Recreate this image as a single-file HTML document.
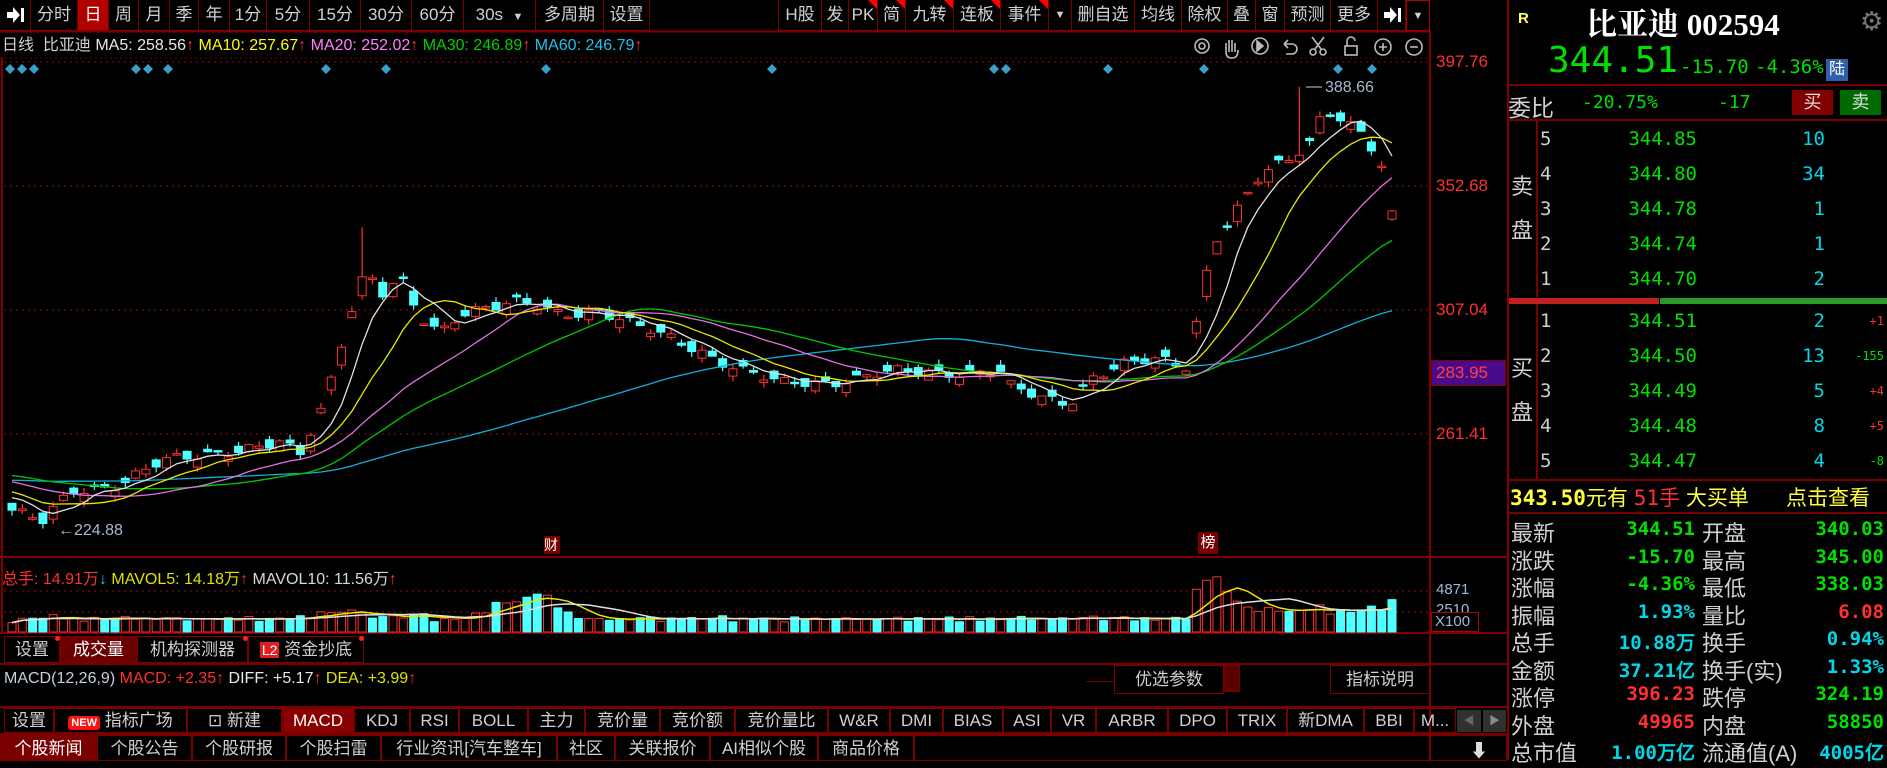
<!DOCTYPE html>
<html><head><meta charset="utf-8">
<style>
*{margin:0;padding:0;box-sizing:border-box}
body{width:1887px;height:760px;background:#000;overflow:hidden;position:relative;font-family:"Liberation Sans","Noto Sans CJK SC",sans-serif;color:#c8c8c8}
.a{position:absolute;white-space:nowrap}
.tb{position:absolute;top:0;height:31px;border-right:1px solid #7a0000;border-bottom:1px solid #7a0000;font-size:17px;line-height:30px;text-align:center;color:#d0d0d0}
.on{background:#b00000;color:#fff}
.tri{position:absolute;right:0;top:0;width:0;height:0;border-top:9px solid #ff0000;border-left:9px solid transparent}
.hl{position:absolute;background:#7a0000}
.tab{position:absolute;height:27px;border:1px solid #7a0000;font-size:17px;line-height:25px;text-align:center;color:#d0d0d0}
.dot{position:absolute;width:5px;height:5px;border-radius:50%;background:#ff2020;top:-1px;right:-1px}
.n{font-family:"DejaVu Sans Mono","Liberation Mono",monospace}
.g{color:#00e000}.r{color:#ff3030}.c{color:#00d8e8}.y{color:#ffff40}.w{color:#d0d0d0}
</style></head><body>

<!-- top toolbar -->
<div class="tb" style="left:0;width:31px"><svg width="20" height="20" style="margin-top:5px"><path d="M2 7h6V2l7 8-7 8v-5H2z" fill="#fff"/><rect x="16" y="3" width="3" height="14" fill="#fff"/></svg></div>
<div class="tb" style="left:31px;width:47px">分时</div>
<div class="tb on" style="left:78px;width:31px">日</div>
<div class="tb" style="left:109px;width:30px">周</div>
<div class="tb" style="left:139px;width:31px">月</div>
<div class="tb" style="left:170px;width:29px">季</div>
<div class="tb" style="left:199px;width:31px">年</div>
<div class="tb" style="left:230px;width:37px">1分</div>
<div class="tb" style="left:267px;width:43px">5分</div>
<div class="tb" style="left:310px;width:51px">15分</div>
<div class="tb" style="left:361px;width:51px">30分</div>
<div class="tb" style="left:412px;width:52px">60分</div>
<div class="tb" style="left:464px;width:72px">30s&nbsp;&nbsp;<span style="font-size:11px">▼</span></div>
<div class="tb" style="left:536px;width:68px">多周期</div>
<div class="tb" style="left:604px;width:46px">设置</div>
<div class="tb" style="left:778px;width:44px;border-left:1px solid #7a0000">H股</div>
<div class="tb" style="left:822px;width:27px">发</div>
<div class="tb" style="left:849px;width:29px">PK<i class="tri"></i></div>
<div class="tb" style="left:878px;width:28px">简<i class="tri"></i></div>
<div class="tb" style="left:906px;width:48px">九转<i class="tri"></i></div>
<div class="tb" style="left:954px;width:47px">连板<i class="tri"></i></div>
<div class="tb" style="left:1001px;width:48px">事件<i class="tri"></i></div>
<div class="tb" style="left:1049px;width:23px;font-size:11px">▼</div>
<div class="tb" style="left:1072px;width:63px">删自选</div>
<div class="tb" style="left:1135px;width:47px">均线</div>
<div class="tb" style="left:1182px;width:46px">除权</div>
<div class="tb" style="left:1228px;width:28px">叠</div>
<div class="tb" style="left:1256px;width:29px">窗</div>
<div class="tb" style="left:1285px;width:46px">预测</div>
<div class="tb" style="left:1331px;width:47px">更多</div>
<div class="tb" style="left:1378px;width:28px"><svg width="20" height="20" style="margin-top:5px"><path d="M2 7h6V2l7 8-7 8v-5H2z" fill="#fff"/><rect x="16" y="3" width="3" height="14" fill="#fff"/></svg></div>
<div class="tb" style="left:1406px;width:24px;font-size:11px;border:1px solid #b00000">▼</div>

<!-- info line -->
<div class="a" style="left:2px;top:36px;font-size:16px;line-height:20px">
<span class="w">日线&nbsp; 比亚迪 </span><span style="color:#e8e8e8">MA5: 258.56</span><span class="r">↑</span>
<span style="color:#ffff00">MA10: 257.67</span><span class="r">↑</span>
<span style="color:#ff80ff">MA20: 252.02</span><span class="r">↑</span>
<span style="color:#00d000">MA30: 246.89</span><span class="r">↑</span>
<span style="color:#20c0e8">MA60: 246.79</span><span class="r">↑</span></div>

<!-- chart svg -->
<svg id="ch" class="a" style="left:0;top:0" width="1507" height="760" xmlns="http://www.w3.org/2000/svg">
<g fill="none" stroke="#bbb" stroke-width="1.6">
<circle cx="1202" cy="46" r="7"/><circle cx="1202" cy="46" r="3"/>
<path d="M1226 52v-9m3 9v-12m3 12v-12m3 12v-9m-9 9q0 6 6 6q6 0 6-8"/>
<circle cx="1260" cy="46" r="8"/><path d="M1257 41l6 5-6 5z" fill="#bbb"/>
<path d="M1284 44h8a5 5 0 0 1 0 10h-6M1284 44l4-4m-4 4l4 4"/>
<circle cx="1313" cy="52" r="3"/><circle cx="1323" cy="52" r="3"/><path d="M1315 49l9-12M1321 49l-9-12"/>
<rect x="1345" y="46" width="12" height="9"/><path d="M1347 46v-5a4 4 0 0 1 8 0"/>
<circle cx="1383" cy="47" r="8"/><path d="M1379 47h8M1383 43v8"/>
<circle cx="1414" cy="47" r="8"/><path d="M1410 47h8"/>
</g>
</svg>

<!-- axis labels -->
<div class="a r" style="left:1436px;top:52px;font-size:17px">397.76</div>
<div class="a r" style="left:1436px;top:176px;font-size:17px">352.68</div>
<div class="a r" style="left:1436px;top:300px;font-size:17px">307.04</div>
<div class="a" style="left:1431px;top:360px;width:75px;height:26px;background:#4a0a8c;border:1px solid #800000"></div>
<div class="a" style="left:1436px;top:363px;font-size:17px;color:#ff4040">283.95</div>
<div class="a r" style="left:1436px;top:424px;font-size:17px">261.41</div>
<div class="a" style="left:1436px;top:581px;font-size:15px;color:#a0b8d8">4871</div>
<div class="a" style="left:1436px;top:601px;font-size:15px;color:#a0b8d8">2510</div>
<div class="a" style="left:1431px;top:612px;width:48px;height:20px;border:1px solid #b00000;background:#000;font-size:15px;line-height:18px;color:#a0b8d8;padding-left:3px">X100</div>
<div class="a" style="left:544px;top:536px;width:16px;height:18px;background:#7a0000;color:#fff;font-size:14px;line-height:18px">财</div>
<div class="a" style="left:1198px;top:532px;width:20px;height:22px;background:#7a0000;color:#fff;font-size:15px;line-height:22px;text-align:center">榜</div>

<!-- volume header -->
<div class="a" style="left:2px;top:565px;font-size:16px">
<span class="r">总手: 14.91万</span><span style="color:#20c0e8">↓</span>
<span style="color:#e0e000">MAVOL5: 14.18万</span><span class="r">↑</span>
<span style="color:#d8d8d8">MAVOL10: 11.56万</span><span class="r">↑</span></div>

<!-- lower tabs -->
<div class="tab" style="left:4px;top:636px;width:56px">设置<i class="dot"></i></div>
<div class="tab" style="left:60px;top:636px;width:77px;background:#6a0000;color:#fff">成交量</div>
<div class="tab" style="left:137px;top:636px;width:111px">机构探测器<i class="dot"></i></div>
<div class="tab" style="left:248px;top:636px;width:116px"><span style="background:#e02020;color:#fff;font-size:14px;padding:0 2px">L2</span> 资金抄底<i class="dot"></i></div>
<div class="hl" style="left:0;top:663px;width:1507px;height:2px"></div>
<div class="a" style="left:4px;top:670px;font-size:16px">
<span style="color:#c8d0e0">MACD(12,26,9)</span> <span class="r">MACD: +2.35</span><span class="r">↑</span>
<span style="color:#e8e8e8">DIFF: +5.17</span><span class="r">↑</span>
<span style="color:#e0e000">DEA: +3.99</span><span class="r">↑</span></div>
<div class="hl" style="left:1086px;top:681px;width:28px;height:1px"></div>
<div class="tab" style="left:1114px;top:665px;width:110px;height:29px;line-height:27px">优选参数</div>
<div class="a" style="left:1224px;top:665px;width:16px;height:27px;background:#5a0000;border:1px solid #7a0000"></div>
<div class="tab" style="left:1330px;top:665px;width:100px;height:29px;line-height:27px">指标说明</div>

<!-- indicator toolbar -->
<div class="hl" style="left:0;top:706px;width:1507px;height:2px"></div>
<div class="tab" style="left:4px;top:708px;width:50px;height:25px;line-height:23px">设置</div>
<div class="tab" style="left:54px;top:708px;width:133px;height:25px;line-height:23px"><span style="background:#ff1010;color:#fff;font-size:11px;border-radius:3px;padding:1px 3px;font-weight:bold">NEW</span> 指标广场</div>
<div class="tab" style="left:187px;top:708px;width:95px;height:25px;line-height:23px">⊡ 新建</div>
<div class="tab" style="left:282px;top:708px;width:72px;height:25px;line-height:23px;background:#8a0000;color:#fff">MACD</div>
<div class="tab" style="left:354px;top:708px;width:56px;height:25px;line-height:23px">KDJ</div>
<div class="tab" style="left:410px;top:708px;width:49px;height:25px;line-height:23px">RSI</div>
<div class="tab" style="left:459px;top:708px;width:69px;height:25px;line-height:23px">BOLL</div>
<div class="tab" style="left:528px;top:708px;width:57px;height:25px;line-height:23px">主力</div>
<div class="tab" style="left:585px;top:708px;width:75px;height:25px;line-height:23px">竞价量</div>
<div class="tab" style="left:660px;top:708px;width:75px;height:25px;line-height:23px">竞价额</div>
<div class="tab" style="left:735px;top:708px;width:93px;height:25px;line-height:23px">竞价量比</div>
<div class="tab" style="left:828px;top:708px;width:62px;height:25px;line-height:23px">W&amp;R</div>
<div class="tab" style="left:890px;top:708px;width:53px;height:25px;line-height:23px">DMI</div>
<div class="tab" style="left:943px;top:708px;width:60px;height:25px;line-height:23px">BIAS</div>
<div class="tab" style="left:1003px;top:708px;width:48px;height:25px;line-height:23px">ASI</div>
<div class="tab" style="left:1051px;top:708px;width:45px;height:25px;line-height:23px">VR</div>
<div class="tab" style="left:1096px;top:708px;width:72px;height:25px;line-height:23px">ARBR</div>
<div class="tab" style="left:1168px;top:708px;width:59px;height:25px;line-height:23px">DPO</div>
<div class="tab" style="left:1227px;top:708px;width:60px;height:25px;line-height:23px">TRIX</div>
<div class="tab" style="left:1287px;top:708px;width:77px;height:25px;line-height:23px">新DMA</div>
<div class="tab" style="left:1364px;top:708px;width:50px;height:25px;line-height:23px">BBI</div>
<div class="tab" style="left:1414px;top:708px;width:42px;height:25px;line-height:23px">M...</div>
<div class="a" style="left:1457px;top:710px;width:24px;height:22px;background:#303030;color:#666;font-size:11px;line-height:22px;text-align:center">◀</div>
<div class="a" style="left:1483px;top:710px;width:23px;height:22px;background:#303030;color:#888;font-size:11px;line-height:22px;text-align:center">▶</div>

<!-- news tabs -->
<div class="hl" style="left:0;top:733px;width:1507px;height:2px"></div>
<div class="tab" style="left:0;top:735px;width:97px;height:26px;background:#7a0000;color:#fff;line-height:26px">个股新闻</div>
<div class="tab" style="left:97px;top:735px;width:95px;height:26px;line-height:26px">个股公告</div>
<div class="tab" style="left:192px;top:735px;width:94px;height:26px;line-height:26px">个股研报</div>
<div class="tab" style="left:286px;top:735px;width:95px;height:26px;line-height:26px">个股扫雷</div>
<div class="tab" style="left:381px;top:735px;width:176px;height:26px;line-height:26px">行业资讯[汽车整车]</div>
<div class="tab" style="left:557px;top:735px;width:58px;height:26px;line-height:26px">社区</div>
<div class="tab" style="left:615px;top:735px;width:95px;height:26px;line-height:26px">关联报价</div>
<div class="tab" style="left:710px;top:735px;width:108px;height:26px;line-height:26px">AI相似个股</div>
<div class="tab" style="left:818px;top:735px;width:96px;height:26px;line-height:26px">商品价格</div>
<div class="tab" style="left:914px;top:735px;width:593px;height:26px"></div>
<div class="a" style="left:1470px;top:737px;color:#ddd;font-size:18px">⬇</div>

<!-- right panel -->
<div class="a" style="left:1507px;top:0;width:380px;height:760px;border-left:2px solid #800000"></div>
<div class="a" style="left:1518px;top:10px;color:#ffff60;font-size:15px;font-weight:bold">R</div>
<div class="a" style="left:1586px;top:-1px;color:#fff;font-size:31px;font-weight:bold;font-family:'Liberation Serif','Noto Serif CJK SC',serif">比亚迪 002594</div>
<div class="a" style="left:1860px;top:6px;color:#777;font-size:26px">⚙</div>
<div class="a n g" style="left:1548px;top:40px;font-size:36px">344.51</div>
<div class="a n g" style="left:1680px;top:56px;font-size:19px">-15.70</div>
<div class="a n g" style="left:1755px;top:56px;font-size:19px">-4.36%</div>
<div class="a" style="left:1826px;top:59px;width:22px;height:22px;background:#2f5fa8;color:#fff;font-size:16px;line-height:22px;text-align:center">陆</div>
<div class="hl" style="left:1507px;top:84px;width:380px;height:2px"></div>
<div class="a w" style="left:1508px;top:89px;font-size:23px">委比</div>
<div class="a n g" style="left:1582px;top:92px;font-size:18px">-20.75%</div>
<div class="a n g" style="left:1718px;top:92px;font-size:18px">-17</div>
<div class="a" style="left:1792px;top:90px;width:41px;height:25px;background:#800000;color:#ddd;text-align:center;font-size:18px;line-height:25px">买</div>
<div class="a" style="left:1840px;top:90px;width:41px;height:25px;background:#006a00;color:#ddd;text-align:center;font-size:18px;line-height:25px">卖</div>
<div class="hl" style="left:1507px;top:119px;width:380px;height:2px"></div>
<div class="hl" style="left:1536px;top:121px;width:2px;height:176px"></div>
<div class="a w" style="left:1511px;top:165px;font-size:22px;line-height:44px">卖<br>盘</div>
<div class="a" style="left:1509px;top:298px;width:150px;height:6px;background:#c02020"></div>
<div class="a" style="left:1660px;top:298px;width:227px;height:6px;background:#2a9a2a"></div>
<div class="hl" style="left:1536px;top:304px;width:2px;height:176px"></div>
<div class="a w" style="left:1511px;top:347px;font-size:22px;line-height:44px">买<br>盘</div>
<div id="ob"></div>
<div class="hl" style="left:1507px;top:479px;width:380px;height:2px"></div>
<div class="a" style="left:1510px;top:482px;font-size:21px"><span class="n y" style="font-weight:bold">343.50</span><span class="y">元有 </span><span class="n r">51</span><span class="r">手</span><span class="y"> 大买单</span></div>
<div class="a y" style="left:1786px;top:482px;font-size:21px">点击查看</div>
<div class="hl" style="left:1507px;top:512px;width:380px;height:2px"></div>
<div id="st"></div>

<script>
var ob='',sp=[['5','344.85','10'],['4','344.80','34'],['3','344.78','1'],['2','344.74','1'],['1','344.70','2']],
by=[['1','344.51','2','+1'],['2','344.50','13','-155'],['3','344.49','5','+4'],['4','344.48','8','+5'],['5','344.47','4','-8']];
function row(y,a){var s='<div class="a n w" style="left:1540px;top:'+(y-12)+'px;font-size:19px">'+a[0]+'</div>'+
'<div class="a n g" style="right:190px;top:'+(y-12)+'px;font-size:19px">'+a[1]+'</div>'+
'<div class="a n c" style="right:62px;top:'+(y-12)+'px;font-size:19px">'+a[2]+'</div>';
if(a[3])s+='<div class="a n '+(a[3][0]=='+'?'r':'g')+'" style="right:3px;top:'+(y-8)+'px;font-size:12px">'+a[3]+'</div>';return s;}
sp.forEach(function(a,i){ob+=row(140+i*35,a)});by.forEach(function(a,i){ob+=row(322+i*35,a)});
document.getElementById('ob').innerHTML=ob;
var st=[['最新','344.51','g','开盘','340.03','g'],['涨跌','-15.70','g','最高','345.00','g'],['涨幅','-4.36%','g','最低','338.03','g'],
['振幅','1.93%','c','量比','6.08','r'],['总手','10.88万','c','换手','0.94%','c'],['金额','37.21亿','c','换手(实)','1.33%','c'],
['涨停','396.23','r','跌停','324.19','g'],['外盘','49965','r','内盘','58850','g'],['总市值','1.00万亿','c','流通值(A)','4005亿','c']],h='';
st.forEach(function(a,i){var y=516+i*27.5;
h+='<div class="a w" style="left:1511px;top:'+y+'px;font-size:22px">'+a[0]+'</div>'+
'<div class="a n '+a[2]+'" style="right:192px;top:'+(y+2)+'px;font-size:19px;font-weight:bold">'+a[1]+'</div>'+
'<div class="a w" style="left:1702px;top:'+y+'px;font-size:22px">'+a[3]+'</div>'+
'<div class="a n '+a[5]+'" style="right:3px;top:'+(y+2)+'px;font-size:19px;font-weight:bold">'+a[4]+'</div>';});
document.getElementById('st').innerHTML=h;

var svg=document.getElementById('ch'),o='';
function L(x1,y1,x2,y2,c,w,d){o+='<line x1="'+x1+'" y1="'+y1+'" x2="'+x2+'" y2="'+y2+'" stroke="'+c+'" stroke-width="'+(w||1)+'"'+(d?' stroke-dasharray="'+d+'"':'')+'/>';}
L(0,31.5,1430,31.5,'#800000',2);L(2,58,2,632,'#800000',2);L(1430,31,1430,760,'#800000',2);
L(0,557,1507,557,'#800000',2);L(0,633,1507,633,'#800000',2);L(0,58,1430,58,'#800000',1,'2 3');
[62,186,310,434].forEach(function(y){L(4,y,1430,y,'#901010',1,'2 4')});
[591,612].forEach(function(y){L(4,y,1430,y,'#901010',1,'2 4')});
[10,22,34,136,148,168,326,386,546,772,994,1006,1108,1204,1338,1372].forEach(function(x){o+='<path d="M'+x+' 64l5 5-5 5-5-5z" fill="#3aa0c8"/>';});
var K=[[12,233],[42,228],[72,240],[120,243],[160,250],[220,255],[280,257],[300,253],[324,272],[348,304],[366,322],[384,312],[400,318],[420,303],[440,298],[460,306],[480,308],[520,309],[560,305],[600,307],[640,300],[660,297],[700,292],[740,285],[760,282],[780,279],[840,281],[880,283],[940,284],[1000,284],[1010,278],[1040,274],[1070,273],[1090,282],[1120,286],[1160,288],[1190,286],[1200,312],[1215,333],[1235,342],[1260,355],[1290,362],[1310,369],[1325,382],[1340,378],[1360,372],[1380,361],[1392,343]];
function kp(x){for(var j=0;j<K.length-1;j++){if(x<=K[j+1][0]){var t=(x-K[j][0])/(K[j+1][0]-K[j][0]);return K[j][1]+t*(K[j+1][1]-K[j][1]);}}return K[K.length-1][1];}
var N=135,dx=(1392-12)/(N-1),C=[],P=[];
for(var i=0;i<60;i++){P.push(i<40?236+16*i/40:252-16*(i-40)/20+2*Math.sin(i));}
for(var i=0;i<N;i++){var x=12+i*dx,p=kp(x)+1.6*Math.sin(i*1.7)+1.2*Math.sin(i*0.53);if(i==N-1)p=343;C.push(p);P.push(p);}
function Y(p){return 62+(397.76-p)*2.72;}
for(var i=0;i<N;i++){var x=12+i*dx,c=C[i],d=3*Math.sin(i*2.3+1)+(i>0?(C[i-1]-c)*0.4:0),op=c+d;if(i==N-1)op=340;
var hi=Math.max(op,c)+Math.abs(2*Math.sin(i*1.1)),lo=Math.min(op,c)-Math.abs(2*Math.cos(i*0.9));
if(Math.abs(x-366)<6)hi=337;if(i==N-10)hi=388.66;
var up=c>=op,col=up?'#ff3030':'#50ffff';
L(x,Y(hi),x,Y(lo),col,1.2);
var t=Y(Math.max(op,c)),b=Y(Math.min(op,c)),hh=Math.max(1.5,b-t);
o+='<rect x="'+(x-4)+'" y="'+t+'" width="8" height="'+hh+'" fill="'+(up?'#000':col)+'" stroke="'+col+'" stroke-width="1"/>';}
function ma(n,col){var s='';for(var i=0;i<N;i++){var a=0;for(var k=0;k<n;k++)a+=P[60+i-k];a/=n;s+=(i?'L':'M')+(12+i*dx).toFixed(1)+' '+Y(a).toFixed(1);}
o+='<path d="'+s+'" fill="none" stroke="'+col+'" stroke-width="1.3"/>';}
ma(60,'#10b0d8');ma(30,'#00c800');ma(20,'#e070e0');ma(10,'#e8e800');ma(5,'#e0e0e0');
o+='<text x="1325" y="92" fill="#a8b8d0" font-size="16" font-family="Liberation Sans">388.66</text>';
L(1306,87,1322,87,'#ccc',1);
o+='<text x="58" y="535" fill="#a8b8d0" font-size="16" font-family="Liberation Sans">←224.88</text>';
var V=[];for(var i=0;i<N;i++){var x=12+i*dx,v=1100+500*Math.abs(Math.sin(i*1.3))+80*Math.abs(C[i]-(i?C[i-1]:C[i]));
v+=3000*Math.exp(-Math.pow((x-540)/22,2))+1800*Math.exp(-Math.pow((x-500)/20,2));
if(x>1195)v+=3200*Math.exp(-Math.pow((x-1215)/18,2))+900;V.push(v);}
function VY(v){return 632-v*0.0085;}
for(var i=0;i<N;i++){var x=12+i*dx,up=i==0||C[i]>=C[i-1],col=up?'#ff3030':'#50ffff',t=VY(V[i]);
o+='<rect x="'+(x-4)+'" y="'+t+'" width="8" height="'+(632-t)+'" fill="'+(up?'#000':col)+'" stroke="'+col+'"/>';}
function vma(n,col){var s='';for(var i=0;i<N;i++){var a=0,m=0;for(var k=0;k<n&&i-k>=0;k++){a+=V[i-k];m++;}s+=(i?'L':'M')+(12+i*dx).toFixed(1)+' '+VY(a/m).toFixed(1);}
o+='<path d="'+s+'" fill="none" stroke="'+col+'" stroke-width="1.5"/>';}
vma(5,'#e8e800');vma(10,'#e0e0e0');
svg.insertAdjacentHTML('afterbegin',o);
</script>
</body></html>
